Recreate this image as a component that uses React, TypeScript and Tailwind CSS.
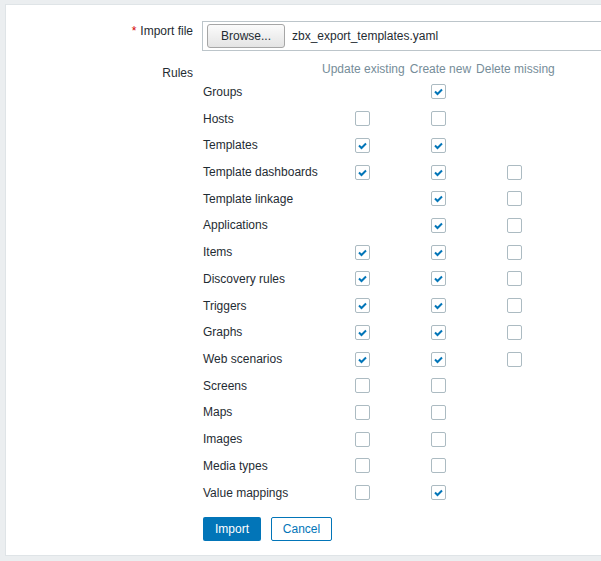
import React from "react";

type Cell = null | boolean;
const rows: [string, Cell, Cell, Cell][] = [
  ["Groups", null, true, null],
  ["Hosts", false, false, null],
  ["Templates", true, true, null],
  ["Template dashboards", true, true, false],
  ["Template linkage", null, true, false],
  ["Applications", null, true, false],
  ["Items", true, true, false],
  ["Discovery rules", true, true, false],
  ["Triggers", true, true, false],
  ["Graphs", true, true, false],
  ["Web scenarios", true, true, false],
  ["Screens", false, false, null],
  ["Maps", false, false, null],
  ["Images", false, false, null],
  ["Media types", false, false, null],
  ["Value mappings", false, true, null],
];

function Box({ v }: { v: Cell }) {
  if (v === null) return <div className="w-[76px] h-[15px]" />;
  return (
    <div className="w-[76px] flex">
      <div className="w-[15px] h-[15px] border border-[#acbbc2] rounded-[2px] bg-white flex items-center justify-center">
        {v && (
          <svg width="13" height="13" viewBox="0 0 13 13">
            <path d="M3 6.5 L5.5 9 L10 4.5" fill="none" stroke="#0275b8" strokeWidth="2" />
          </svg>
        )}
      </div>
    </div>
  );
}

export default function App() {
  return (
    <div
      className="w-[601px] h-[561px] bg-[#ebeef0] overflow-hidden pt-[4px] pl-[5px] text-[12px] leading-[14px] text-[#1f2c33]"
      style={{ fontFamily: '"Liberation Sans", Arial, sans-serif' }}
    >
      <div className="w-[640px] bg-white border border-[#dfe4e7] pt-[16px] pb-[14px]">
        <div className="flex">
          <div className="w-[187px] text-right pt-[3px] shrink-0">
            <span className="text-[#d40000] mr-[4px]">*</span>Import file
          </div>
          <div className="ml-[9px] w-[420px] h-[30px] border border-[#bcc5ca] flex items-center pl-[4px]">
            <button className="w-[78px] h-[24px] rounded-[3px] border border-[#a6a6a6] bg-gradient-to-b from-[#fbfbfb] to-[#e4e4e4] text-[#1f2c33] text-[12px]">
              Browse...
            </button>
            <span className="ml-[7px]">zbx_export_templates.yaml</span>
          </div>
        </div>

        <div className="flex mt-[11px]">
          <div className="w-[187px] text-right pt-[4px] shrink-0">Rules</div>
          <div className="ml-[10px]">
            <div className="flex h-[15px] text-[#768d99] gap-[5px] pl-[119px]">
              <span>Update existing</span>
              <span>Create new</span>
              <span>Delete missing</span>
            </div>
            <div className="pt-[1.5px]">
              {rows.map(([name, a, b, c]) => (
                <div key={name} className="flex items-center h-[26.73px]">
                  <span className="w-[152px] shrink-0">{name}</span>
                  <Box v={a} />
                  <Box v={b} />
                  <Box v={c} />
                </div>
              ))}
            </div>
            <div className="flex gap-[10px] mt-[10.5px]">
              <button className="w-[58px] h-[24px] rounded-[2px] bg-[#0275b8] text-white text-[12px]">
                Import
              </button>
              <button className="w-[61px] h-[24px] rounded-[2px] border border-[#0275b8] text-[#0275b8] bg-white text-[12px]">
                Cancel
              </button>
            </div>
          </div>
        </div>
      </div>
    </div>
  );
}
